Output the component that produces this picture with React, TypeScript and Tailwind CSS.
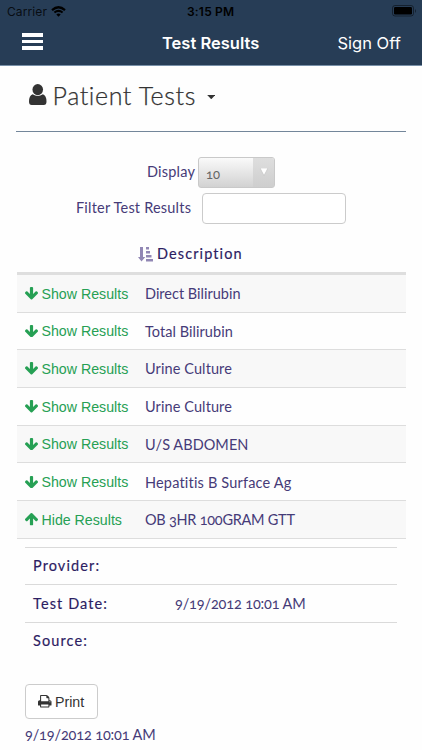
import type { ReactNode } from "react";

const ARROW =
  "M1675 832q0 53-37 90l-651 652q-39 37-91 37-53 0-90-37l-651-652q-38-36-38-90 0-53 38-91l74-75q39-37 91-37 53 0 90 37l294 294v-704q0-52 38-90t90-38h128q52 0 90 38t38 90v704l294-294q37-37 90-37 52 0 91 37l75 75q37 39 37 91z";
const PRINT =
  "M384 1536h896v-256h-896v256zM384 896h896v-384h-160q-40 0-68-28t-28-68v-160h-640v640zM1536 960q0-26-19-45t-45-19-45 19-19 45 19 45 45 19 45-19 19-45zM1664 960v416q0 13-9.5 22.5t-22.5 9.5h-224v160q0 40-28 68t-68 28h-960q-40 0-68-28t-28-68v-160h-224q-13 0-22.5-9.5t-9.5-22.5v-416q0-79 56.5-135.5t135.5-56.5h64v-544q0-40 28-68t68-28h672q40 0 88 20t76 48l152 152q28 28 48 76t20 88v256h64q79 0 135.5 56.5t56.5 135.5z";

type Row = { name: string; open?: boolean; tracking: string };

const rows: Row[] = [
  { name: "Direct Bilirubin", tracking: "tracking-normal" },
  { name: "Total Bilirubin", tracking: "tracking-[0.05px]" },
  { name: "Urine Culture", tracking: "tracking-[0.1px]" },
  { name: "Urine Culture", tracking: "tracking-[0.1px]" },
  { name: "U/S ABDOMEN", tracking: "tracking-[0.05px]" },
  { name: "Hepatitis B Surface Ag", tracking: "tracking-[0.18px]" },
  { name: "OB 3HR 100GRAM GTT", open: true, tracking: "tracking-[-0.25px]" },
];

function StatusBar() {
  return (
    <div className="flex h-[22px] items-center text-black">
      <span className="ml-[7px] w-[44px] pt-px font-['Inter',sans-serif] text-[12px] tracking-[0.1px] text-black/80">Carrier</span>
      <svg className="h-[11px] w-[15px]" viewBox="0 0 15 11">
        <path d="M1 4.1Q7.5-1.6 14 4.1" fill="none" stroke="currentColor" strokeWidth="2.2" />
        <path d="M3.4 6.6Q7.5 3.1 11.6 6.6" fill="none" stroke="currentColor" strokeWidth="2" />
        <path d="M5.3 8.4Q7.5 6.6 9.7 8.4L7.5 10.7z" fill="currentColor" />
      </svg>
      <span className="ml-[121px] w-[52px] whitespace-nowrap pt-px font-['Inter',sans-serif] text-[12px] font-semibold tracking-[0.2px]">3:15 PM</span>
      <svg className="ml-auto mr-[5px] h-[12px] w-[25px]" viewBox="0 0 25 12">
        <rect x="0.5" y="0.5" width="21" height="10.5" rx="2.5" fill="none" stroke="#000" strokeOpacity=".45" />
        <rect x="2" y="2" width="18" height="7.5" rx="1.2" fill="#000" />
        <path d="M23 4v4q2-2 0-4" fill="#000" fillOpacity=".45" />
      </svg>
    </div>
  );
}

function Detail({ label, children }: { label: string; children?: ReactNode }) {
  return (
    <div className="flex h-[37.5px] items-center border-t border-[#dadada] pl-2">
      <span className="w-[142px] tracking-[1.1px] text-[#2c2062] [-webkit-text-stroke:0.15px_#2c2062]">{label}</span>
      {children}
    </div>
  );
}

export default function App() {
  return (
    <div className="h-[750px] w-[422px] overflow-hidden bg-[#fefefe] font-['Lato',sans-serif] text-[14.5px] leading-5 text-[#463b78]">
      <header className="h-[66px] border-b border-[#7890a8] bg-[#273d56]">
        <StatusBar />
        <div className="flex h-[42px] items-center text-white">
          <div className="mb-[3px] ml-[22px] flex w-[21px] flex-col gap-[3.4px]">
            <i className="h-[3.2px] bg-white" />
            <i className="h-[3.2px] bg-white" />
            <i className="h-[3.2px] bg-white" />
          </div>
          <span className="ml-[119px] w-[175.5px] font-['Inter',sans-serif] text-[16.5px] font-semibold">Test Results</span>
          <span className="whitespace-nowrap font-['Inter',sans-serif] text-[16.5px]">Sign Off</span>
        </div>
      </header>

      <h1 className="mx-4 flex h-[66px] items-center border-b border-[#73869a] pb-[8px] text-[25px] leading-8 text-[#333]">
        <svg className="ml-[13px] h-[21px] w-[17.5px]" viewBox="0 0 17.5 21" fill="#333">
          <ellipse cx="8.75" cy="5.6" rx="5.3" ry="5.6" />
          <path d="M3.6 10.3Q8.75 13.9 13.9 10.3 17.5 11.8 17.5 17.5 17.5 21 14.8 21H2.7Q0 21 0 17.5 0 11.8 3.6 10.3z" />
        </svg>
        <span className="ml-[6px] w-[144px] whitespace-nowrap font-light tracking-[0.6px] [-webkit-text-stroke:0.25px_#333]">Patient Tests</span>
        <svg className="ml-[10px] mt-[5px] h-[4.5px] w-[8.5px]" viewBox="0 0 9 5">
          <path d="M0 0h9L4.5 4.7z" fill="#333" />
        </svg>
      </h1>

      <div className="mt-[25px] flex h-[31px] items-center">
        <span className="ml-[147px] w-[51px] pb-[2px] tracking-[0.2px]">Display</span>
        <div className="flex h-[31px] w-[77px] overflow-hidden rounded-[3px] border border-[#c9c9c9] bg-linear-to-b from-[#fafafa] to-[#d2d2d2]">
          <span className="w-[54px] pl-[7px] pt-[5.5px] text-[13px] oldstyle-nums text-[#666]">10</span>
          <span className="flex flex-1 justify-center bg-linear-to-b from-[#dedede] to-[#cecece] pt-[10px]">
            <svg className="h-[8px] w-[8px]" viewBox="0 0 8 8">
              <path d="M0 0h8L4 7.5z" fill="#fff" stroke="#bbb" strokeWidth=".5" />
            </svg>
          </span>
        </div>
      </div>
      <div className="mt-[5px] flex h-[31px] items-center">
        <span className="ml-[76px] w-[125.5px] whitespace-nowrap pb-[2px] tracking-[0.2px]">Filter Test Results</span>
        <div className="h-[31px] w-[144.5px] rounded-[4px] border border-[#cbcbcb] bg-white" />
      </div>

      <main className="ml-[16.5px] w-[389px]">
        <div className="mt-[10px] flex h-[41px] items-center border-b-[3px] border-[#dedede] pl-[121.5px] pt-[2px] text-[#2c2062]">
          <svg className="h-[15px] w-[15px]" viewBox="0 0 15 15" fill="#9187b4">
            <path d="M2 0h3v10h2.3L3.5 14.5 0 10h2zM8 0h3v2.5H8zM8 4h4v2.5H8zM8 8h5.5v2.5H8zM8 12h7v2.5H8z" />
          </svg>
          <span className="ml-[4px] tracking-[1.1px] [-webkit-text-stroke:0.15px_#2c2062]">Description</span>
        </div>

        {rows.map((r, i) => (
          <div
            key={i}
            className={
              "flex h-[37.7px] items-center border-b border-[#dddddd] pl-[8.5px] " + (i % 2 === 0 ? "bg-[#f8f8f8]" : "bg-[#fefefe]")
            }
          >
            <svg className={"h-[12.5px] w-[13px] " + (r.open ? "rotate-180" : "")} viewBox="117 128 1558 1483" preserveAspectRatio="none" fill="#26a054">
              <path d={ARROW} />
            </svg>
            <span className="ml-[3.5px] w-[103.5px] whitespace-nowrap pt-[0.5px] font-['Liberation_Sans',sans-serif] text-[14.2px] text-[#26a054]">
              {r.open ? "Hide Results" : "Show Results"}
            </span>
            <span className={"whitespace-nowrap pt-[1.5px] oldstyle-nums " + r.tracking}>{r.name}</span>
          </div>
        ))}

        <section className="mx-[8.5px] pt-[8px]">
          <Detail label="Provider:" />
          <Detail label="Test Date:">
            <span className="whitespace-nowrap tracking-[-0.14px] oldstyle-nums">9/19/2012 10:01 AM</span>
          </Detail>
          <Detail label="Source:" />
          <button className="mt-[24.5px] flex h-[35px] w-[72.5px] items-center rounded-[4px] border border-[#cccccc] bg-white pl-[12px] font-['Liberation_Sans',sans-serif] text-[14.2px] text-[#333]">
            <svg className="h-[12.5px] w-[13.5px]" viewBox="0 128 1664 1536" preserveAspectRatio="none" fill="#333">
              <path d={PRINT} />
            </svg>
            <span className="ml-[3.5px] pt-px">Print</span>
          </button>
          <div className="mt-[6px] whitespace-nowrap tracking-[-0.14px] oldstyle-nums">9/19/2012 10:01 AM</div>
        </section>
      </main>
    </div>
  );
}
